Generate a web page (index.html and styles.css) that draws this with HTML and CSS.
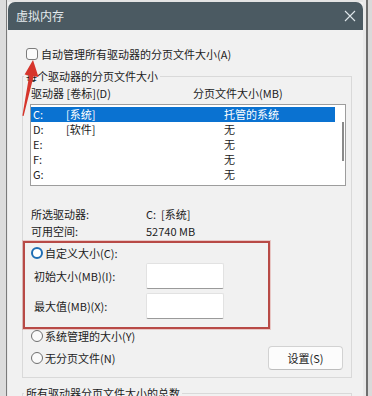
FILE: index.html
```html
<!DOCTYPE html>
<html lang="zh-CN">
<head>
<meta charset="utf-8">
<title>虚拟内存</title>
<link rel="stylesheet" href="styles.css">
</head>
<body>
<div class="screen">
  <div class="edge-left"></div>
  <div class="dialog">
    <div class="titlebar">
      <span class="title">虚拟内存</span>
      <svg class="close" width="12" height="12" viewBox="0 0 12 12"><path d="M1 1 L11 11 M11 1 L1 11" stroke="#dfe6ea" stroke-width="1.1" fill="none"/></svg>
    </div>
    <div class="body">
      <div class="auto"><span class="checkbox"></span><span>自动管理所有驱动器的分页文件大小(A)</span></div>
      <fieldset class="group">
        <legend>每个驱动器的分页文件大小</legend>
        <div class="cols"><span class="c1">驱动器 [卷标](D)</span><span>分页文件大小(MB)</span></div>
        <div class="listbox">
          <div class="rows">
            <div class="row sel"><span class="drv">C:</span><span class="lbl">[系统]</span><span>托管的系统</span></div>
            <div class="row"><span class="drv">D:</span><span class="lbl">[软件]</span><span>无</span></div>
            <div class="row"><span class="drv">E:</span><span class="lbl"></span><span>无</span></div>
            <div class="row"><span class="drv">F:</span><span class="lbl"></span><span>无</span></div>
            <div class="row"><span class="drv">G:</span><span class="lbl"></span><span>无</span></div>
          </div>
          <div class="scroll"><div class="thumb"></div></div>
        </div>
        <div class="info first"><span class="k">所选驱动器:</span><span>C:&nbsp; [系统]</span></div>
        <div class="info"><span class="k">可用空间:</span><span>52740 MB</span></div>
        <div class="custom">
          <div class="opt"><span class="radio on"></span><span>自定义大小(C):</span></div>
          <div class="field"><span class="fl">初始大小(MB)(I):</span><span class="input"></span></div>
          <div class="field second"><span class="fl">最大值(MB)(X):</span><span class="input"></span></div>
        </div>
        <div class="opt"><span class="radio"></span><span>系统管理的大小(Y)</span></div>
        <div class="last">
          <div class="opt"><span class="radio"></span><span>无分页文件(N)</span></div>
          <button class="btn" type="button">设置(S)</button>
        </div>
      </fieldset>
      <fieldset class="group total">
        <legend>所有驱动器分页文件大小的总数</legend>
      </fieldset>
    </div>
  </div>
  <div class="edge-right"></div>
</div>
<svg class="arrow" width="372" height="396" viewBox="0 0 372 396">
  <polygon points="33,60 38.5,77 33.6,76.2 23.6,116 22.4,115.8 29.2,75.4 24.6,74.6" fill="#d6352c"/>
</svg>
</body>
</html>
```
FILE: styles.css
```css
* { box-sizing: border-box; }
html, body { margin: 0; padding: 0; }
body {
  width: 372px;
  height: 396px;
  overflow: hidden;
  position: relative;
  background: #e4e4e4;
  font-family: "Noto Sans CJK SC", "Noto Sans", sans-serif;
  font-size: 11px;
  color: #1c1c1c;
}
.screen {
  display: flex;
  height: 396px;
}
.edge-left {
  width: 8px;
  background: linear-gradient(to right, #dcdcdc 0, #dcdcdc 6px, #7a7a7a 6px, #7a7a7a 7px, #e8e8e8 7px);
}
.edge-right {
  flex: 1;
  background: linear-gradient(to right, #e9e9e9 0, #e9e9e9 3px, #6e6e6e 3px, #6e6e6e 5px, #dadada 5px);
}
.dialog {
  width: 355px;
  margin-top: 2px;
  background: #f1f1f1;
  display: flex;
  flex-direction: column;
  overflow: hidden;
}
.titlebar {
  height: 28px;
  flex: none;
  background: #4b5a62;
  border-radius: 7px 7px 0 0;
  display: flex;
  align-items: center;
  justify-content: space-between;
  padding: 0 7px 0 8px;
}
.title {
  color: #e4eaed;
  font-size: 12px;
  line-height: 14px;
}
.close { display: block; }
.body {
  padding: 0 11px 0 14px;
}
.auto {
  margin-top: 17px;
  padding-left: 4px;
  height: 14px;
  line-height: 14px;
  display: flex;
  align-items: center;
  gap: 3px;
}
.checkbox {
  width: 12px;
  height: 12px;
  border: 1px solid #7c7c7c;
  border-radius: 3px;
  background: #fbfbfb;
}
.group {
  margin: 8px 0 0 0;
  border: 1px solid #d9d9d9;
  padding: 3px 5px 7px 8px;
  min-width: 0;
}
.group legend {
  padding: 0 2px;
  margin-left: -7px;
  line-height: 14px;
  color: #1c1c1c;
}
.cols {
  display: flex;
  line-height: 14px;
  height: 14px;
}
.c1 { width: 162px; }
.listbox {
  margin: 4px 0 0 -1px;
  width: 316px;
  height: 82px;
  border: 1px solid #9d9d9d;
  background: #ffffff;
  display: flex;
}
.rows {
  flex: 1;
  padding-top: 2px;
}
.row {
  display: flex;
  height: 15px;
  line-height: 15px;
}
.row.sel {
  background: #0a72d1;
  color: #ffffff;
}
.drv { width: 35px; padding-left: 2px; }
.lbl { width: 158px; }
.scroll {
  width: 10px;
}
.thumb {
  margin: 17px 0 0 7px;
  width: 2px;
  height: 39px;
  background: #8a8a8a;
}
.info {
  display: flex;
  line-height: 14px;
  height: 14px;
  margin-top: 3px;
}
.info.first { margin-top: 21px; }
.k { width: 115px; }
.custom {
  margin: 3px 0 0 -8px;
  width: 247px;
  border: 2px solid #b84a46;
  box-shadow: 0 0 0 1px rgba(214, 120, 116, 0.35);
  padding: 3px 0 8px 6px;
}
.opt {
  display: flex;
  align-items: center;
  gap: 2px;
  height: 14px;
  line-height: 14px;
}
.radio {
  width: 12px;
  height: 12px;
  border-radius: 50%;
  border: 1px solid #6f6f6f;
  background: #fafafa;
}
.radio.on {
  border: 2.5px solid #1d6db3;
  background: #ffffff;
}
.field {
  display: flex;
  align-items: center;
  margin-top: 3px;
  padding-left: 3px;
  height: 26px;
}
.field.second { margin-top: 4px; }
.fl { width: 112px; }
.input {
  width: 78px;
  height: 26px;
  background: #ffffff;
  border: 1px solid #e2e2e2;
  border-bottom: 1px solid #9a9a9a;
  border-radius: 2px;
}
.last {
  margin-top: 3px;
  height: 24px;
  display: flex;
  align-items: center;
  justify-content: space-between;
}
.btn {
  width: 75px;
  height: 24px;
  margin-right: 3px;
  background: #fcfcfc;
  border: 1px solid #d2d2d2;
  border-bottom-color: #bdbdbd;
  border-radius: 4px;
  font-family: inherit;
  font-size: 11px;
  color: #1c1c1c;
  padding: 0;
}
.group.total {
  margin-top: 8px;
  height: 40px;
}
.arrow {
  position: absolute;
  left: 0;
  top: 0;
  pointer-events: none;
}
```
